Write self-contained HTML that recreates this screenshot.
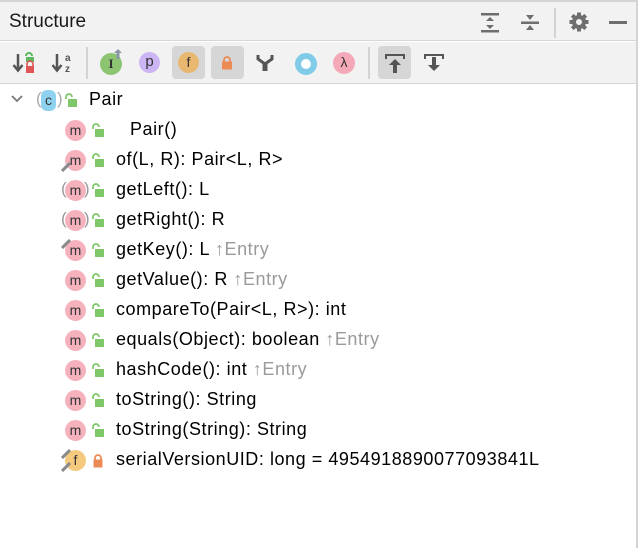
<!DOCTYPE html>
<html><head><meta charset="utf-8"><style>
*{margin:0;padding:0;box-sizing:border-box}
body{width:638px;height:548px;background:#fff;font-family:"Liberation Sans","Noto Sans CJK SC",sans-serif;position:relative;overflow:hidden;color:#000}
.top{position:absolute;left:0;top:0;width:638px;height:2px;background:#d4d4d4}
.title{position:absolute;left:0;top:2px;width:636px;height:39px;background:#f2f2f2;border-bottom:1px solid #d6d6d6}
.title span{position:absolute;left:9px;top:9px;font-size:19px;color:#1a1a1a}
.tb{position:absolute;left:0;top:42px;width:636px;height:42px;background:#f2f2f2;border-bottom:1px solid #d6d6d6}
.rb{position:absolute;right:0;top:0;width:2px;height:548px;background:#d4d4d4}
.sep{position:absolute;width:2px;background:#d3d3d3}
.ci{position:absolute;border-radius:50%;text-align:center;font-size:14px;color:#333}
.sel{position:absolute;background:#d6d6d6;border-radius:4px;width:33px;height:33px;top:4px}
.row{position:absolute;left:0;height:30px;width:636px}
.row .t{position:absolute;left:116px;top:4px;font-size:18px;letter-spacing:0.55px;white-space:nowrap}
.g{color:#9a9a9a}
.m{position:absolute;left:65px;top:5px;width:21px;height:21px;border-radius:50%;background:#f5b2bd;font-size:14px;text-align:center;line-height:20px;color:#333}
.lk{position:absolute;left:91px;top:8px}
</style></head><body>
<div class="top"></div>
<div class="title"><span>Structure</span>
<svg style="position:absolute;left:480px;top:10px" width="20" height="22"><rect x="1" y="1" width="18" height="2.5" fill="#6e6e6e"/><rect x="1" y="18" width="18" height="2.5" fill="#6e6e6e"/><path d="M6 9 L10 5 L14 9Z M6 13 L10 17 L14 13Z" fill="#6e6e6e"/></svg>
<svg style="position:absolute;left:520px;top:10px" width="20" height="22"><rect x="1" y="9.5" width="18" height="2.5" fill="#6e6e6e"/><path d="M6 3 L10 8 L14 3Z M6 18 L10 13 L14 18Z" fill="#6e6e6e"/></svg>
<div class="sep" style="left:554px;top:6px;height:30px"></div>
<svg style="position:absolute;left:568px;top:9px" width="22" height="22" viewBox="0 0 22 22"><g fill="#6e6e6e"><circle cx="11" cy="11" r="7"/><rect x="9" y="1.5" width="4" height="19"/><rect x="1.5" y="9" width="19" height="4"/><rect x="9" y="1.5" width="4" height="19" transform="rotate(45 11 11)"/><rect x="9" y="1.5" width="4" height="19" transform="rotate(-45 11 11)"/></g><circle cx="11" cy="11" r="3" fill="#f2f2f2"/></svg>
<div style="position:absolute;left:609px;top:19px;width:18px;height:2.5px;background:#6e6e6e"></div>
</div>
<div class="tb">
<svg style="position:absolute;left:12px;top:9px" width="24" height="24"><path d="M6 3 V19 M1.5 14 L6 19.5 L10.5 14" stroke="#555" stroke-width="2.5" fill="none"/><path d="M14 5 a3 3 0 0 1 6 0" stroke="#5cb85c" stroke-width="2" fill="none"/><rect x="14" y="6" width="8" height="5" fill="#5cb85c"/><rect x="14" y="15" width="8" height="7" fill="#e05555"/><path d="M15 15 V13 a3 3 0 0 1 6 0 V15" stroke="#e05555" stroke-width="1.6" fill="none"/></svg>
<svg style="position:absolute;left:51px;top:9px" width="24" height="24"><path d="M6 3 V19 M1.5 14 L6 19.5 L10.5 14" stroke="#555" stroke-width="2.5" fill="none"/><text x="14" y="10" font-size="10" font-family="Liberation Sans" fill="#555" font-weight="bold">a</text><text x="14" y="21" font-size="10" font-family="Liberation Sans" fill="#555" font-weight="bold">z</text></svg>
<div class="sep" style="left:86px;top:5px;height:32px"></div>
<div class="ci" style="left:100px;top:11px;width:22px;height:22px;background:#8cc472;font-family:'Liberation Serif';font-weight:bold;line-height:22px;font-size:13px">I</div>
<svg style="position:absolute;left:113px;top:6px" width="10" height="12"><path d="M5 1 L9 5 H6.5 V11 H3.5 V5 H1Z" fill="#8a97a6"/></svg>
<div class="ci" style="left:139px;top:10px;width:21px;height:21px;background:#cbb5f2;line-height:20px;font-size:15px">p</div>
<div class="sel" style="left:172px"></div>
<div class="ci" style="left:178px;top:10px;width:21px;height:21px;background:#e8b870;line-height:20px;font-size:14px">f</div>
<div class="sel" style="left:211px"></div>
<svg style="position:absolute;left:221px;top:13px" width="12" height="15"><path d="M3 7 V5 a3 3 0 0 1 6 0 V7" stroke="#ec8a55" stroke-width="1.8" fill="none"/><rect x="1" y="6.5" width="10" height="8" fill="#ec8a55"/></svg>
<svg style="position:absolute;left:256px;top:12px" width="18" height="18"><path d="M2 1 V5 L9 10 L16 5 V1" stroke="#555" stroke-width="3" fill="none"/><rect x="6.5" y="9" width="5" height="8" fill="#555"/></svg>
<div style="position:absolute;left:295px;top:11px;width:22px;height:22px;border-radius:50%;border:6px solid #7fcbe8;background:#fff"></div>
<div class="ci" style="left:333px;top:10px;width:22px;height:22px;background:#f4a9b8;line-height:21px;font-size:14px">λ</div>
<div class="sep" style="left:368px;top:5px;height:32px"></div>
<div class="sel" style="left:378px"></div>
<svg style="position:absolute;left:384px;top:11px" width="22" height="22"><path d="M2 6 V2 H20 V6" stroke="#555" stroke-width="2" fill="none"/><path d="M11 6 L17 12 H13 V20 H9 V12 H5Z" fill="#555"/></svg>
<svg style="position:absolute;left:423px;top:11px" width="22" height="22"><path d="M2 6 V2 H20 V6" stroke="#555" stroke-width="2" fill="none"/><path d="M9 4 H13 V12 H17 L11 18 L5 12 H9Z" fill="#555"/></svg>
</div>
<div class="rb"></div>

<div class="row" style="top:85px">
<svg style="position:absolute;left:10px;top:9px" width="14" height="10"><path d="M2 2 L7 7 L12 2" stroke="#777" stroke-width="1.8" fill="none"/></svg>
<span style="position:absolute;left:36px;top:4px;color:#aaa;font-size:17px">(</span><span style="position:absolute;left:57px;top:4px;color:#aaa;font-size:17px">)</span>
<div style="position:absolute;left:41px;top:5px;width:15px;height:21px;border-radius:6px;background:#8fd2ef;text-align:center;font-size:14px;line-height:20px;color:#333">c</div>
<svg class="lk" style="left:64px" width="14" height="15"><path d="M2 6 V4 a3 3 0 0 1 6 0" stroke="#7fc86a" stroke-width="1.8" fill="none"/><rect x="4" y="6" width="9" height="8" fill="#7fc86a"/></svg>
<div class="t" style="left:89px">Pair</div></div>

<div class="row" style="top:115px"><div class="m">m</div><svg class="lk" width="14" height="15"><path d="M2 6 V4 a3 3 0 0 1 6 0" stroke="#7fc86a" stroke-width="1.8" fill="none"/><rect x="4" y="6" width="9" height="8" fill="#7fc86a"/></svg><div class="t" style="left:130px">Pair()</div></div>

<div class="row" style="top:145px"><div class="m">m</div><svg style="position:absolute;left:61px;top:17px" width="10" height="10"><path d="M1 9 L9 1" stroke="#8a8a8a" stroke-width="3"/></svg><svg class="lk" width="14" height="15"><path d="M2 6 V4 a3 3 0 0 1 6 0" stroke="#7fc86a" stroke-width="1.8" fill="none"/><rect x="4" y="6" width="9" height="8" fill="#7fc86a"/></svg><div class="t">of(L, R): Pair&lt;L, R&gt;</div></div>

<div class="row" style="top:175px"><div class="m">m</div><span style="position:absolute;left:61px;top:4px;color:#999;font-size:17px">(</span><span style="position:absolute;left:84px;top:4px;color:#999;font-size:17px">)</span><svg class="lk" width="14" height="15"><path d="M2 6 V4 a3 3 0 0 1 6 0" stroke="#7fc86a" stroke-width="1.8" fill="none"/><rect x="4" y="6" width="9" height="8" fill="#7fc86a"/></svg><div class="t">getLeft(): L</div></div>

<div class="row" style="top:205px"><div class="m">m</div><span style="position:absolute;left:61px;top:4px;color:#999;font-size:17px">(</span><span style="position:absolute;left:84px;top:4px;color:#999;font-size:17px">)</span><svg class="lk" width="14" height="15"><path d="M2 6 V4 a3 3 0 0 1 6 0" stroke="#7fc86a" stroke-width="1.8" fill="none"/><rect x="4" y="6" width="9" height="8" fill="#7fc86a"/></svg><div class="t">getRight(): R</div></div>

<div class="row" style="top:235px"><div class="m">m</div><svg style="position:absolute;left:61px;top:4px" width="10" height="10"><path d="M1 9 L9 1" stroke="#8a8a8a" stroke-width="3"/></svg><svg class="lk" width="14" height="15"><path d="M2 6 V4 a3 3 0 0 1 6 0" stroke="#7fc86a" stroke-width="1.8" fill="none"/><rect x="4" y="6" width="9" height="8" fill="#7fc86a"/></svg><div class="t">getKey(): L <span class="g">↑Entry</span></div></div>

<div class="row" style="top:265px"><div class="m">m</div><svg class="lk" width="14" height="15"><path d="M2 6 V4 a3 3 0 0 1 6 0" stroke="#7fc86a" stroke-width="1.8" fill="none"/><rect x="4" y="6" width="9" height="8" fill="#7fc86a"/></svg><div class="t">getValue(): R <span class="g">↑Entry</span></div></div>

<div class="row" style="top:295px"><div class="m">m</div><svg class="lk" width="14" height="15"><path d="M2 6 V4 a3 3 0 0 1 6 0" stroke="#7fc86a" stroke-width="1.8" fill="none"/><rect x="4" y="6" width="9" height="8" fill="#7fc86a"/></svg><div class="t">compareTo(Pair&lt;L, R&gt;): int</div></div>

<div class="row" style="top:325px"><div class="m">m</div><svg class="lk" width="14" height="15"><path d="M2 6 V4 a3 3 0 0 1 6 0" stroke="#7fc86a" stroke-width="1.8" fill="none"/><rect x="4" y="6" width="9" height="8" fill="#7fc86a"/></svg><div class="t">equals(Object): boolean <span class="g">↑Entry</span></div></div>

<div class="row" style="top:355px"><div class="m">m</div><svg class="lk" width="14" height="15"><path d="M2 6 V4 a3 3 0 0 1 6 0" stroke="#7fc86a" stroke-width="1.8" fill="none"/><rect x="4" y="6" width="9" height="8" fill="#7fc86a"/></svg><div class="t">hashCode(): int <span class="g">↑Entry</span></div></div>

<div class="row" style="top:385px"><div class="m">m</div><svg class="lk" width="14" height="15"><path d="M2 6 V4 a3 3 0 0 1 6 0" stroke="#7fc86a" stroke-width="1.8" fill="none"/><rect x="4" y="6" width="9" height="8" fill="#7fc86a"/></svg><div class="t">toString(): String</div></div>

<div class="row" style="top:415px"><div class="m">m</div><svg class="lk" width="14" height="15"><path d="M2 6 V4 a3 3 0 0 1 6 0" stroke="#7fc86a" stroke-width="1.8" fill="none"/><rect x="4" y="6" width="9" height="8" fill="#7fc86a"/></svg><div class="t">toString(String): String</div></div>

<div class="row" style="top:445px"><div class="m" style="background:#f5c97e">f</div><svg style="position:absolute;left:61px;top:4px" width="10" height="10"><path d="M1 9 L9 1" stroke="#8a8a8a" stroke-width="3"/></svg><svg style="position:absolute;left:61px;top:17px" width="10" height="10"><path d="M1 9 L9 1" stroke="#8a8a8a" stroke-width="3"/></svg><svg class="lk" width="14" height="15"><path d="M4 7 V5 a3 3 0 0 1 6 0 V7" stroke="#ec8a55" stroke-width="1.8" fill="none"/><rect x="2.5" y="6.5" width="9" height="8" fill="#ec8a55"/></svg><div class="t">serialVersionUID: long = 4954918890077093841L</div></div>
</body></html>
